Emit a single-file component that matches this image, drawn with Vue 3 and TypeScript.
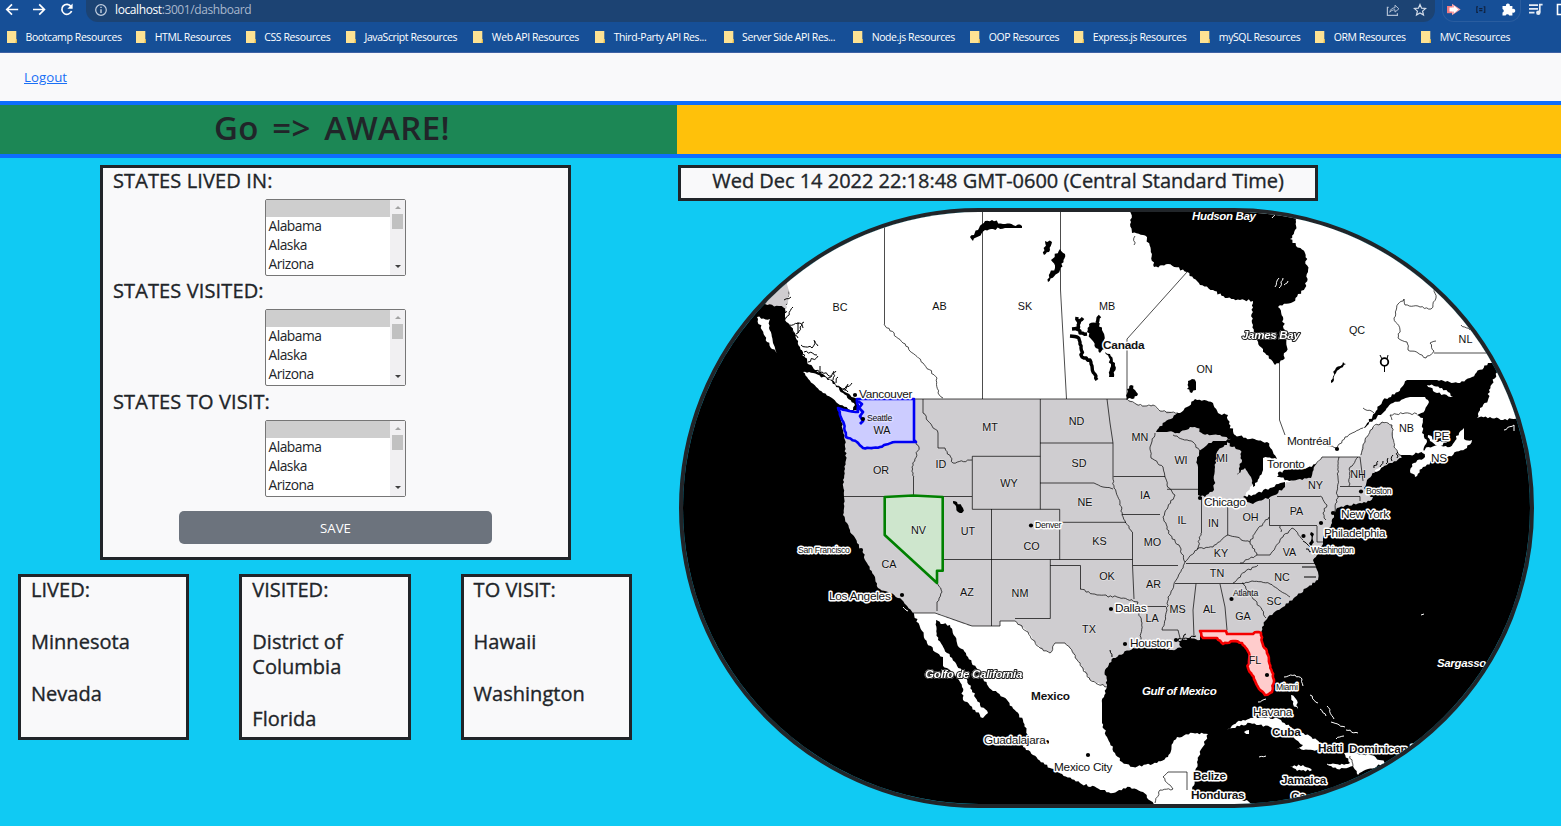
<script setup lang="ts">
type Place = [name: string, x: number, y: number]

const bookmarks: { label: string; width: number }[] = [
  { label: 'Bootcamp Resources', width: 129.2 },
  { label: 'HTML Resources', width: 109.6 },
  { label: 'CSS Resources', width: 100.2 },
  { label: 'JavaScript Resources', width: 127.4 },
  { label: 'Web API Resources', width: 121.8 },
  { label: 'Third-Party API Res...', width: 128.4 },
  { label: 'Server Side API Res...', width: 129.6 },
  { label: 'Node.js Resources', width: 117 },
  { label: 'OOP Resources', width: 104.2 },
  { label: 'Express.js Resources', width: 126 },
  { label: 'mySQL Resources', width: 114.8 },
  { label: 'ORM Resources', width: 106.2 },
  { label: 'MVC Resources', width: 100 },
]

const pickers = ['STATES LIVED IN:', 'STATES VISITED:', 'STATES TO VISIT:']
const options = ['Alabama', 'Alaska', 'Arizona']

const lists = [
  { title: 'LIVED:', states: ['Minnesota', 'Nevada'] },
  { title: 'VISITED:', states: ['District of Columbia', 'Florida'] },
  { title: 'TO VISIT:', states: ['Hawaii', 'Washington'] },
]

/** Turns "x,y x,y …" into a path whose slanted segments are roughened like a coastline. */
function coast(points: string, amp = 1.2, closed = true): string {
  const pts = points.trim().split(/\s+/).map((p) => p.split(',').map(Number))
  if (closed) pts.push(pts[0])
  let seed = Math.round(pts[0][0] * 13 + pts[0][1] * 7)
  const rand = () => {
    seed = (seed * 1103515245 + 12345) % 2147483648
    return seed / 2147483648 - 0.5
  }
  let d = `M${pts[0][0]} ${pts[0][1]}`
  for (let i = 1; i < pts.length; i++) {
    const [x0, y0] = pts[i - 1]
    const [x1, y1] = pts[i]
    const dx = x1 - x0
    const dy = y1 - y0
    const len = Math.hypot(dx, dy)
    const steps = dx === 0 || dy === 0 ? 1 : Math.max(1, Math.round(len / 2.2))
    for (let s = 1; s < steps; s++) {
      const off = rand() * 2 * amp
      const t = s / steps
      d += `L${(x0 + dx * t - (dy / len) * off).toFixed(1)} ${(y0 + dy * t + (dx / len) * off).toFixed(1)}`
    }
    d += `L${x1} ${y1}`
  }
  return closed ? d + 'Z' : d
}
const river = (points: string) => coast(points, 1, false)

const whiteLand = [
  // Canada
  '787,205 787,283 789,296 785,310 785,320 795,333 800,347 807,363 820,373 835,383 847,393 857,400 870,430 1100,440 1240,500 1380,470 1400,455 1410,455 1422,452 1427,442 1422,433 1423,418 1417,415 1425,410 1429,402 1425,397 1410,397 1393,403 1377,417 1363,428 1375,413 1383,400 1398,392 1407,380 1437,380 1460,383 1472,377 1488,363 1500,363 1500,205',
  '803,372 813,373 830,380 843,393 855,405 853,410 840,405 823,393 807,377',
  '757,317 770,319 769,328 773,343 777,353 767,342 762,330',
  '1427,385 1434,386 1442,388 1453,397 1437,393',
  '1498,370 1508,387 1522,417 1503,420 1490,417 1477,418 1480,408 1488,400 1489,390',
  '1422,450 1437,445 1450,447 1459,433 1464,428 1464,439 1472,440 1467,448 1447,457 1433,461 1423,467 1415,477 1410,471 1412,464 1425,457',
  '1428,435 1438,442 1448,441 1440,446 1430,441',
  // Mexico and Central America
  '913,612 920,627 927,643 935,652 943,657 943,666 955,675 962,687 963,700 975,710 983,718 988,713 980,705 972,690 963,673 955,662 947,653 938,640 936,620 943,624 950,625 957,643 968,657 983,677 988,686 1003,697 1023,720 1028,737 1023,747 1033,755 1050,768 1080,783 1113,793 1130,787 1143,792 1155,806 1262,806 1240,799 1215,797 1192,791 1195,777 1197,762 1202,748 1208,734 1193,733 1177,737 1173,743 1168,757 1157,763 1133,767 1122,762 1115,753 1107,737 1102,723 1102,703 1107,687 1080,640 1015,610 935,605',
  // Cuba, Hispaniola, Jamaica, Bahamas
  '1227,730 1237,722 1253,717 1277,718 1290,727 1317,740 1325,746 1317,750 1297,749 1303,745 1293,737 1270,727 1250,723 1233,728',
  '1328,764 1340,765 1350,763 1344,753 1370,755 1387,763 1368,769 1358,775 1353,766 1337,769',
  '1290,766 1303,765 1312,770 1297,771',
  '1244,732 1249,730 1249,734',
  '1291,695 1296,699 1298,709 1293,704',
]

const alaska = '773,291 787,282 789,295 786,309 779,306 765,304'

const usa =
  '858,399 1127,399 1136,404 1145,406 1153,405 1160,411 1168,411 1178,414 1215,422 1233,438 1263,470 1250,487 1245,497 1260,497 1285,484 1300,474 1314,466 1322,457 1360,457 1365,440 1373,427 1382,422 1392,425 1394,447 1402,458 1390,463 1377,469 1367,480 1364,488 1367,494 1373,497 1370,501 1360,503 1337,508 1334,513 1332,523 1323,537 1323,544 1317,555 1313,560 1317,570 1318,580 1308,587 1295,597 1283,607 1268,617 1262,627 1261,634 1200,634 1200,640 1190,638 1178,641 1182,648 1170,650 1160,648 1148,646 1133,648 1113,658 1105,670 1107,687 1090,680 1082,667 1070,648 1065,643 1055,643 1050,653 1040,648 1033,640 1028,632 1015,621 1000,621 1000,626 972,626 935,613 913,613 902,600 888,592 878,588 875,577 867,563 863,553 857,543 853,535 850,530 847,523 843,515 844,497 843,480 846,460 845,440 840,413 857,410'

const water = [
  // Hudson and James Bay
  '1130,205 1131,222 1132,233 1147,237 1154,267 1168,264 1187,272 1200,285 1213,290 1225,298 1253,301 1252,323 1257,340 1265,353 1275,365 1283,360 1287,347 1285,333 1283,317 1278,307 1293,302 1305,288 1308,272 1305,253 1290,239 1295,230 1297,218 1297,205',
  // Great Lakes
  '1156,432 1165,422 1180,413 1187,407 1195,399 1213,403 1218,413 1228,415 1229,424 1233,431 1236,438 1228,439 1220,435 1203,434 1197,428 1190,427 1177,433 1167,432',
  '1198,495 1198,467 1197,460 1199,453 1207,445 1213,441 1227,441 1227,445 1217,452 1215,467 1214,490 1205,497',
  '1226,441 1235,435 1250,439 1267,442 1273,452 1277,459 1263,458 1263,470 1253,487 1251,477 1245,468 1237,475 1242,460 1240,450 1232,447',
  '1243,497 1257,493 1270,488 1285,482 1285,487 1270,497 1253,504 1247,502',
  '1277,477 1283,471 1300,468 1312,467 1316,464 1311,478 1300,479 1287,480',
  // Northern lakes
  '970,237 978,230 985,221 992,220 1003,224 1022,226 1022,228 1005,228 993,229 985,230 973,241',
  '1060,249 1065,254 1060,270 1048,282 1050,273 1055,268 1051,260',
  '1045,241 1052,242 1050,250 1044,255',
  '1089,324 1098,322 1103,332 1105,349 1100,353 1092,340 1087,332',
  '1105,352 1110,354 1115,363 1114,377 1109,377 1111,364',
  '1188,381 1192,379 1196,382 1196,390 1192,393 1187,389',
  '1127,389 1131,385 1135,390 1138,394 1132,399 1126,400',
  '1343,362 1346,364 1336,373 1334,380 1331,383 1335,370',
  '953,501 957,502 963,508 962,513 958,512 956,506',
  // Chesapeake Bay
  '1311,532 1314,534 1312,546 1315,555 1310,548',
]

const inlets = [
  '1077,317 1079,323 1078,331',
  '1072,329 1077,328 1080,333 1087,334',
  '1070,336 1077,337 1080,342 1081,348 1082,357 1090,360 1092,366 1097,380',
  '1100,316 1097,323',
  '1083,318 1079,323',
]

const fjords = [
  '786,318 793,307', '789,325 800,323 803,328', '796,334 804,322', '801,345 812,348 815,341', '798,322 798,333',
  '804,352 817,355', '808,362 818,356', '820,373 820,366', '828,378 836,371', '836,383 838,377', '833,380 834,371',
  '843,389 852,383', '780,308 787,312', '790,328 798,338', '807,363 801,350', '814,340 818,346', '784,300 791,297',
  '790,338 797,345', '812,369 822,372 832,376', '838,386 848,392', '845,390 848,384', '786,312 783,325 793,337',
  '1302,567 1317,567', '1304,577 1316,577', '1306,549 1314,553', '1303,541 1310,547',
  '1374,468 1378,461', '1380,467 1383,461', '1386,464 1388,458', '1392,461 1393,455', '1397,458 1398,452',
  '1145,648 1140,642', '1112,657 1110,650', '1178,641 1186,634', '1182,640 1196,636', '1167,650 1170,644',
]

const straightBorders = [
  'M858 399H1127V339L1187 272', 'M884.5 222V324', 'M982.5 212V399', 'M1060.5 212V290L1066.5 399',
  'M1279.5 363V420L1285 435', 'M1434 353H1488', 'M844 496.5H972', 'M972.3 456.3H1040.3M972.3 456.3V509.3H1059.7V559.5',
  'M1040.3 399V509.3', 'M1040 443H1113', 'M1040 483H1094', 'M1060 522.3H1126', 'M991.5 509V626', 'M943 559.5H1132.5',
  'M1050.3 559.5V618.5H1015', 'M1050 565.5H1080.5V589', 'M1132.5 532V565L1134 599', 'M1138 606.5H1166',
  'M1133 565.5H1178', 'M1107 399L1110 423L1113 443', 'M1113.5 476.5H1165', 'M1122 514.5H1160', 'M1167 489.3H1198',
  'M1201.5 497V533', 'M1227.7 505V535', 'M1205 505H1247', 'M1269.5 499V525.5H1317', 'M1277 496.5H1320', 'M1340 486.5H1362',
  'M1338 496.5H1360V501', 'M1186 563.5H1315', 'M1175 583.5H1243', 'M1196 583.7L1193 610L1194 637', 'M1220 584L1225 607L1227 630',
  'M1162 630H1178L1180 638', 'M1322 457H1360L1363 481', 'M913.5 477V497', 'M972 626H1000V621H1015', 'M935 613L972 626', 'M1168 772H1187V790',
  'M1317 526V542H1323', 'M913 613L935 613',
]

const rivers = [
  '884,324 903,343 923,363 937,378 938,393 943,398', '916,442 919,447 912,467 914,477',
  '923,399 923,413 938,433 938,448 945,448 953,463 972,460', '937,583 942,592 937,602 937,611',
  '1094,483 1103,487 1113,489', '1080,589 1097,595 1117,597 1138,602 1139,613 1142,623 1140,642',
  '1113,443 1113,477 1114,488 1120,503 1122,515 1132,532',
  '1165,477 1167,485 1175,495 1168,507 1163,517 1170,535 1180,547 1185,562 1178,577 1168,597 1167,610 1162,630',
  '1155,433 1150,447 1151,458 1163,467 1165,477', '1173,435 1193,442 1200,452', '1201,533 1197,550 1185,562',
  '1197,549 1213,547 1228,535 1250,542 1257,530 1269,517', '1250,542 1257,555 1270,555 1280,540 1292,528 1303,540',
  '1257,555 1240,563', '1280,526 1281,532', '1320,496 1327,505 1323,513 1326,520', '1339,457 1338,478 1337,502 1334,512',
  '1358,457 1350,467 1349,486', '1233,583 1245,572 1258,565', '1242,583 1252,581 1270,584 1290,597',
  '1243,583 1252,597 1262,610 1266,618', '1127,399 1136,404 1145,406 1153,405 1160,411 1178,413',
  '1107,687 1090,680 1082,667 1070,648 1065,643 1055,643 1050,653 1040,648 1033,640 1028,632 1015,621',
  '1300,474 1314,466 1322,457', '1361,455 1365,440 1373,427 1382,422 1392,425 1394,447 1402,458',
  '1363,428 1345,437 1337,448', '1392,420 1390,415 1405,413 1417,414',
  '1433,287 1436,298 1431,309 1418,306 1405,305 1404,299 1398,304 1394,318 1400,330 1398,338 1407,342 1408,350 1418,353 1426,358 1434,351 1430,343 1436,341',
  '1168,772 1163,777 1173,789 1160,790 1155,803',
  '1309,438 1320,443 1336,448', '1363,408 1374,413', '1353,766 1350,756', '1135,236 1134,245', '1461,325 1470,330',
]

const islands = [
  '1284,677 1295,675 1302,679 1303,686', '1310,695 1318,703', '1320,709 1326,716', '1327,706 1334,719',
  '1331,722 1345,727', '1346,730 1358,733', '1336,739 1344,736', '1421,615 1424,614', '1259,757 1266,756',
  '1275,287 1279,278', '1279,288 1283,278', '1284,285 1288,281', '1272,218 1276,214', '1258,702 1266,699',
  '903,607 908,611', '1327,764 1334,766', '1286,690 1292,688', '1504,430 1514,425 1514,431',
]

const washington = '838,408 845,410 858,412 857,399 914,399 914,440 916,442 895,442 880,447 863,448 857,442 846,437 844,424'
const nevada = 'M884.7 497L913 495.5L942.7 497V570.7L937 570.7V583L884.7 535Z'
const florida =
  '1200,631 1226,631 1227,634 1253,634 1257,632 1261,633 1262,642 1268,655 1272,672 1274,680 1272,692 1265,695 1258,687 1252,675 1248,668 1249,653 1242,643 1233,641 1223,644 1217,638 1203,638'

const stateNames: Place[] = [
  ['BC', 840, 311], ['AB', 939.5, 310], ['SK', 1025, 310], ['MB', 1107, 310], ['ON', 1204.5, 373], ['QC', 1357, 334],
  ['NL', 1465.5, 343], ['NB', 1406.5, 432], ['NH', 1358, 478], ['NY', 1315.5, 489],
  ['PA', 1296.5, 515], ['VA', 1289.5, 556], ['NC', 1282, 581], ['SC', 1274, 605], ['GA', 1243, 620], ['AL', 1209.5, 613],
  ['MS', 1177.5, 613], ['TN', 1217, 577], ['KY', 1221, 557], ['OH', 1250.5, 521], ['IN', 1213.5, 527], ['IL', 1182, 524],
  ['MI', 1222, 462], ['WI', 1181, 464], ['MN', 1140, 441], ['IA', 1145, 499], ['MO', 1152.5, 546], ['AR', 1153.5, 588],
  ['LA', 1152, 622], ['OK', 1107, 580], ['KS', 1099.5, 545], ['NE', 1085, 506], ['SD', 1079, 467], ['ND', 1076.5, 425],
  ['MT', 990, 431], ['WY', 1009, 487], ['CO', 1031.5, 550], ['NM', 1020, 597], ['AZ', 967, 596], ['UT', 968, 535],
  ['NV', 918.5, 534], ['CA', 889, 568], ['OR', 881, 474], ['ID', 941, 468], ['WA', 882, 434], ['TX', 1089, 633], ['FL', 1255, 664],
]

const cities: Place[] = [
  ['Vancouver', 859, 398], ['Los Angeles', 829, 600], ['Chicago', 1204, 506], ['Toronto', 1267, 468], ['Montréal', 1287, 445],
  ['New York', 1341, 518], ['Philadelphia', 1324, 537], ['Dallas', 1115, 612], ['Houston', 1130, 647], ['Guadalajara', 984, 744],
  ['Mexico City', 1054, 771], ['Havana', 1253, 716], ['PE', 1434, 440], ['NS', 1431, 462],
]
const towns: Place[] = [
  ['San Francisco', 798, 553], ['Denver', 1035, 528], ['Boston', 1366, 494], ['Washington', 1311, 553], ['Miami', 1276, 690],
]
const inlandTowns: Place[] = [['Seattle', 867, 421], ['Atlanta', 1233, 596]]
const countries: Place[] = [
  ['Canada', 1103, 349], ['Mexico', 1031, 700], ['Cuba', 1272, 736], ['Haiti', 1318, 752], ['Dominican R', 1349, 753],
  ['Jamaica', 1281, 784], ['Belize', 1193, 780], ['Honduras', 1191, 799], ['Ca', 1291, 800],
]
const seas: Place[] = [
  ['Hudson Bay', 1192, 220], ['Gulf of Mexico', 1142, 695], ['Sargasso', 1437, 667],
]
const outlinedSeas: Place[] = [['James Bay', 1242, 339], ['Golfo de California', 925, 678]]

const dots: [number, number][] = [
  [855, 395], [863, 419], [861, 550], [902, 595], [1031, 525.5], [1111, 609], [1125, 644], [1200, 498], [1280, 473.5], [1337, 449],
  [1361, 491.5], [1333, 513], [1321, 523], [1303.5, 536], [1231.5, 599], [1267, 675], [1252, 716], [1047, 742], [1088, 755], [1176, 640],
]
</script>

<template>
  <div class="window">
    <header class="browser">
      <div class="toolbar">
        <svg class="nav" viewBox="0 0 80 22">
          <g fill="none" stroke="#fff" stroke-width="1.7">
            <path d="M18.2 9.5H7M12 4.3L6.8 9.5L12 14.7" />
            <path d="M33 9.5H44.2M39.2 4.3L44.4 9.5L39.2 14.7" />
            <path d="M71 6.5A5 5 0 1 0 71.6 11" />
          </g>
          <path d="M72.6 3.6V8.8H67.4Z" fill="#fff" />
        </svg>
        <div class="omnibox">
          <svg class="info" viewBox="0 0 14 14">
            <circle cx="7" cy="7" r="5.3" fill="none" stroke="#c3cfdf" stroke-width="1.2" />
            <path d="M7 6.2V10M7 3.8V5.1" stroke="#c3cfdf" stroke-width="1.4" />
          </svg>
          <span class="url"><b>localhost</b>:3001/dashboard</span>
          <svg class="share" viewBox="0 0 14 14">
            <path d="M2.6 4.4H1.4V12.3H11.4V10.2" fill="none" stroke="#aebdd2" stroke-width="1.2" />
            <path d="M3.8 9.3C4.2 6.4 6 4.9 9 4.7V2.2L12.9 5.8L9 9.1V6.8C6.6 6.8 5 7.6 3.8 9.3Z" fill="none" stroke="#aebdd2" stroke-width="1" />
          </svg>
          <svg class="star" viewBox="0 0 14 14">
            <path d="M7 1.5L8.6 5.2L12.6 5.5L9.6 8.1L10.5 12L7 9.9L3.5 12L4.4 8.1L1.4 5.5L5.4 5.2Z" fill="none" stroke="#d3dce8" stroke-width="1.2" />
          </svg>
        </div>
        <div class="extensions">
          <svg viewBox="0 0 78 22">
            <path d="M5 6H11V13.2H5Z" fill="#ef7a80" />
            <path d="M10 3.8L18.6 9.6L10 15.3Z" fill="#f3a3a8" />
            <path d="M7.5 7.6H12V5.8L16.4 9.6L12 13.3V11.6H7.5Z" fill="#fff" />
            <path d="M36 6.8H34.8V12.4H36M41.6 6.8H42.8V12.4H41.6M37.2 8.6H40.4M37.2 10.6H40.4" fill="none" stroke="#10213c" stroke-width="1.1" />
            <path d="M60.5 6H64A2 2 0 1 1 67.8 6H70.4V9A2 2 0 1 1 70.4 12.6V15.6H67.2A1.9 1.9 0 0 0 63.6 15.6H60.5V12.6A1.9 1.9 0 0 0 60.5 9Z" fill="#fff" />
          </svg>
        </div>
        <svg class="media" viewBox="0 0 40 22">
          <path d="M8 5.2H17M8 8.9H17M8 12.6H13.5M18.8 12.5V4.6H21.6" fill="none" stroke="#e5ecf5" stroke-width="1.7" />
          <circle cx="17.3" cy="12.7" r="2.2" fill="#e5ecf5" />
          <path d="M41 4.5H36.5V14.5H41" fill="none" stroke="#fff" stroke-width="1.6" />
        </svg>
      </div>
      <nav class="bookmarks">
        <a v-for="b in bookmarks" :key="b.label" :style="{ width: b.width + 'px' }">
          <svg viewBox="0 0 10 12"><path d="M0 0H9.3V8L10 9V12H0Z" fill="#fde293" /><path d="M9 8L10 9V12H8.4Z" fill="#e0b84a" /></svg>
          <span>{{ b.label }}</span>
        </a>
      </nav>
    </header>

    <nav class="topnav"><a>Logout</a></nav>

    <div class="hero">
      <div class="brand"><h1>Go =&gt; AWARE!</h1></div>
      <div class="banner"></div>
    </div>

    <main>
      <section class="left">
        <form class="card form">
          <div v-for="p in pickers" :key="p" class="field">
            <h5>{{ p }}</h5>
            <div class="listbox">
              <ul>
                <li class="picked"></li>
                <li v-for="o in options" :key="o">{{ o }}</li>
              </ul>
              <div class="scroll"><i class="up"></i><i class="thumb"></i><i class="down"></i></div>
            </div>
          </div>
          <button type="button">SAVE</button>
        </form>
        <div class="lists">
          <div v-for="l in lists" :key="l.title" class="card list">
            <h5>{{ l.title }}</h5>
            <h5 v-for="s in l.states" :key="s">{{ s }}</h5>
          </div>
        </div>
      </section>

      <section class="right">
        <h5 class="card clock">Wed Dec 14 2022 22:18:48 GMT-0600 (Central Standard Time)</h5>
        <div class="map">
          <svg viewBox="683 212 847 592">
            <rect x="683" y="212" width="847" height="592" fill="#000" />
            <path v-for="p in whiteLand" :key="p" :d="coast(p)" fill="#fff" />
            <path :d="coast(alaska)" fill="#cfcdd0" />
            <path :d="coast(usa, 1)" fill="#cfcdd0" />
            <g fill="none" stroke="#000" stroke-width="0.7">
              <path v-for="p in straightBorders" :key="p" :d="p" />
              <path v-for="p in rivers" :key="p" :d="river(p)" />
            </g>
            <path v-for="p in water" :key="p" :d="coast(p, 1.4)" fill="#000" />
            <g fill="none" stroke="#000" stroke-width="3.4" stroke-linejoin="round">
              <path v-for="p in inlets" :key="p" :d="coast(p, 1.2, false)" />
            </g>
            <circle cx="1384.5" cy="362" r="3.8" fill="none" stroke="#000" stroke-width="1.8" />
            <path d="M1380 355L1382 359M1388 355L1387 359M1384.5 366V372" stroke="#000" />
            <g fill="none" stroke="#000">
              <path v-for="p in fjords" :key="p" :d="coast(p, 1.5, false)" />
            </g>
            <g fill="none" stroke="#fff">
              <path v-for="p in islands" :key="p" :d="coast(p, 1, false)" />
            </g>

            <g stroke-width="2.6" stroke-linejoin="round">
              <path :d="coast(washington, 0.6)" fill="#ccccff" stroke="#0000f5" />
              <path d="M858 401L862 404L859 408L863 412L860 416L863 421L860 424" fill="none" stroke="#0000f5" stroke-width="2.8" />
              <path :d="nevada" fill="#cee6cd" stroke="#008000" />
              <path :d="coast(florida, 0.8)" fill="#ffcccc" stroke="#f50000" />
            </g>

            <circle v-for="([x, y], i) in dots" :key="i" :cx="x" :cy="y" r="2.1" fill="#000" />
            <g class="label state"><text v-for="[n, x, y] in stateNames" :key="n" :x="x" :y="y">{{ n }}</text></g>
            <g class="label city"><text v-for="[n, x, y] in cities" :key="n" :x="x" :y="y">{{ n }}</text></g>
            <g class="label town"><text v-for="[n, x, y] in towns" :key="n" :x="x" :y="y">{{ n }}</text></g>
            <g class="label town inland"><text v-for="[n, x, y] in inlandTowns" :key="n" :x="x" :y="y">{{ n }}</text></g>
            <g class="label country"><text v-for="[n, x, y] in countries" :key="n" :x="x" :y="y">{{ n }}</text></g>
            <g class="label sea"><text v-for="[n, x, y] in seas" :key="n" :x="x" :y="y">{{ n }}</text></g>
            <g class="label sea outlined"><text v-for="[n, x, y] in outlinedSeas" :key="n" :x="x" :y="y">{{ n }}</text></g>
          </svg>
        </div>
      </section>
    </main>
  </div>
</template>

<style>
body {
  margin: 0;
  overflow: hidden;
}
</style>

<style scoped>
* {
  box-sizing: border-box;
}
.window {
  height: 100vh;
  display: flex;
  flex-direction: column;
  overflow: hidden;
  background: #10caf3;
  color: #212529;
  font-family: 'Open Sans', 'Noto Sans', sans-serif;
}
.browser {
  flex: none;
  height: 53px;
  background: #164f97;
  border-bottom: 1px solid #3f62a4;
}
.toolbar {
  display: flex;
  height: 22px;
}
.nav {
  width: 80px;
  height: 22px;
  margin-right: 6px;
}
.omnibox {
  display: flex;
  align-items: center;
  width: 1349px;
  height: 22px;
  padding: 0 8px 3px;
  background: #1c4373;
  border-radius: 0 0 12px 12px;
}
.info {
  width: 14px;
  height: 14px;
}
.url {
  margin-left: 7px;
  font-size: 12px;
  letter-spacing: -0.4px;
  color: #a9b8cd;
  flex: 1;
}
.url b {
  font-weight: 400;
  color: #fff;
}
.share,
.star {
  width: 14px;
  height: 14px;
}
.share {
  margin-right: 13px;
}
.extensions {
  width: 79px;
  height: 22px;
  margin-left: 7px;
  border: 1px solid #2a5d9f;
  border-top: 0;
  border-radius: 0 0 12px 12px;
}
.extensions svg {
  display: block;
  width: 78px;
  height: 22px;
  margin-left: -1px;
}
.media {
  width: 40px;
  height: 22px;
}
.bookmarks {
  display: flex;
  height: 30px;
  padding-left: 7px;
}
.bookmarks a {
  flex: none;
  display: flex;
  align-items: center;
  gap: 8.5px;
  color: #fff;
  font-size: 10.5px;
  letter-spacing: -0.4px;
  white-space: nowrap;
}
.bookmarks svg {
  width: 10px;
  height: 12px;
}
.topnav {
  flex: none;
  height: 48px;
  padding: 15px 24px 0;
  background: #f9f9fa;
  font-size: 13.3px;
  line-height: 19px;
}
.topnav a {
  color: #1a70f5;
  text-decoration: underline;
}
.hero {
  flex: none;
  display: flex;
  height: 57px;
  border-top: 4px solid #0d6efd;
  border-bottom: 4px solid #0d6efd;
}
.brand {
  width: 677px;
  background: #1c8755;
}
.banner {
  flex: 1;
  background: #ffc10a;
}
h1 {
  margin: 0;
  padding-right: 13px;
  text-align: center;
  font-size: 33px;
  font-weight: 600;
  line-height: 46px;
  letter-spacing: 0.4px;
  word-spacing: 4.5px;
}
main {
  display: flex;
  padding-top: 7px;
}
.left {
  width: 678px;
}
.card {
  border: 3px solid #212529;
  background: #f9f9fa;
}
h5 {
  margin: 0;
  font-size: 20px;
  font-weight: 500;
  line-height: 25px;
  letter-spacing: 0.02px;
  -webkit-text-stroke: 0.35px #212529;
}
.form {
  width: 471px;
  height: 395px;
  margin-left: 100px;
  padding: 0 10px;
}
.field {
  height: 110.4px;
}
.field h5 {
  letter-spacing: 0.12px;
}
.listbox {
  display: flex;
  width: 141px;
  height: 77px;
  margin: 6px 0 0 152px;
  border: 1px solid #767676;
  border-radius: 2px;
  background: #fff;
}
.listbox ul {
  flex: 1;
  margin: 0;
  padding: 0;
  list-style: none;
}
.listbox li {
  height: 19px;
  padding-left: 2.5px;
  font-size: 13.8px;
  line-height: 18px;
  letter-spacing: -0.5px;
  color: #212529;
}
.listbox li.picked {
  height: 17px;
  background: #cecece;
}
.scroll {
  display: flex;
  flex-direction: column;
  align-items: center;
  width: 15px;
  background: #f1f0f2;
}
.up,
.down {
  border: 3px solid transparent;
}
.up {
  margin-top: 3px;
  border-bottom-color: #a3a3a3;
}
.thumb {
  width: 11px;
  height: 15px;
  margin-top: 5px;
  background: #c1c1c1;
}
.down {
  margin-top: 36px;
  border-top-color: #404040;
}
button {
  display: block;
  width: 313px;
  height: 33px;
  margin: 12px 0 0 66px;
  border: 0;
  border-radius: 5px;
  background: #6c737d;
  color: #fff;
  font: 13.2px 'Open Sans', 'Noto Sans', sans-serif;
}
.lists {
  display: flex;
  gap: 50px;
  margin: 14px 0 0 18px;
}
.list {
  width: 171.3px;
  height: 166px;
  padding: 0 10px;
}
.list h5 {
  margin-bottom: 27px;
}
.clock {
  width: 640px;
  height: 36px;
  text-align: center;
  white-space: nowrap;
  letter-spacing: -0.02px;
}
.map {
  width: 855px;
  height: 600px;
  margin: 7px 0 0 1px;
  border: 4px solid #212529;
  border-radius: 300px;
  overflow: hidden;
}
.map svg {
  display: block;
  width: 847px;
  height: 592px;
}
.label {
  font-family: 'Liberation Sans', Arial, sans-serif;
  fill: #111;
  stroke: #fff;
  stroke-width: 3px;
  stroke-linejoin: round;
  paint-order: stroke;
}
.state {
  font-size: 10.8px;
  text-anchor: middle;
  stroke-opacity: 0.35;
  stroke-width: 1.5px;
}
.city {
  font-size: 11.8px;
  letter-spacing: -0.25px;
}
.town {
  font-size: 8.7px;
  letter-spacing: -0.3px;
}
.inland {
  stroke-opacity: 0.3;
}
.country {
  font-size: 11.8px;
  font-weight: 700;
  letter-spacing: -0.2px;
}
.sea {
  font-size: 11.5px;
  font-weight: 700;
  font-style: italic;
  fill: #fff;
  stroke: #000;
  stroke-width: 2px;
  letter-spacing: -0.35px;
}
.outlined {
  stroke: #1a1a1a;
  font-size: 11.6px;
  filter: drop-shadow(0 0 0.7px #fff);
}
</style>
